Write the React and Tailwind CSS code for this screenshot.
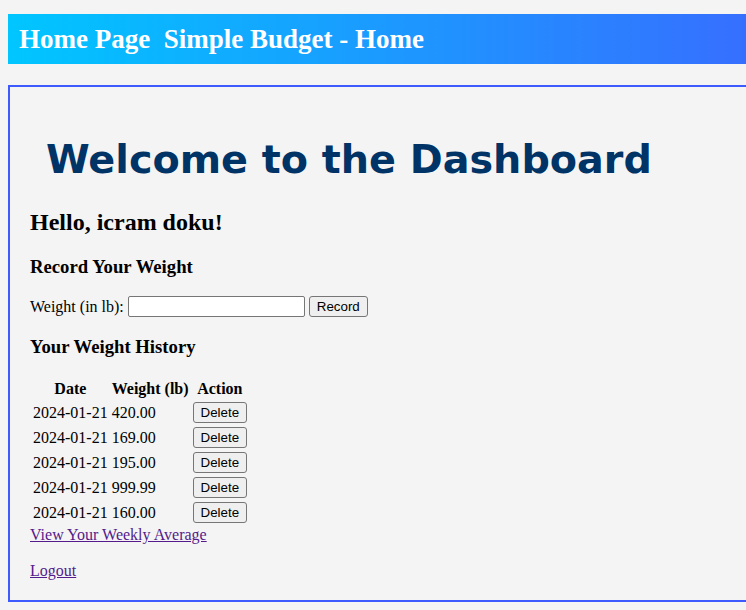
import React from "react";

const entries = [
  { date: "2024-01-21", weight: "420.00" },
  { date: "2024-01-21", weight: "169.00" },
  { date: "2024-01-21", weight: "195.00" },
  { date: "2024-01-21", weight: "999.99" },
  { date: "2024-01-21", weight: "160.00" },
];

const btn =
  "h-[21px] px-[7px] bg-[#efefef] border border-[#767676] rounded-[3px] text-[13.33px] leading-[15px] text-black font-['Liberation_Sans',Arial,sans-serif]";

const App = () => {
  return (
    <div className="min-h-screen bg-[#f4f4f4] pl-2 pt-[14px] text-[16px] text-black font-['Liberation_Serif','Times_New_Roman',serif]">
      <header className="h-[50px] flex items-center pl-[11px] bg-linear-to-r/srgb from-[#00c6ff] to-[#366fff]">
        <h1 className="text-[27px] font-bold text-white whitespace-pre">Home Page  Simple Budget - Home</h1>
      </header>

      <main className="mt-[21px] border-2 border-r-0 border-[#3d5afe] pl-5 pb-5">
        <h1 className="mt-[48px] ml-4 text-[39.7px] leading-[48px] font-bold text-[#003366] font-['DejaVu_Sans',Verdana,sans-serif]">
          Welcome to the Dashboard
        </h1>

        <h2 className="mt-[25px] text-[24px] leading-[28px] font-bold">Hello, icram doku!</h2>

        <h3 className="mt-[20px] text-[18.72px] leading-[22px] font-bold">Record Your Weight</h3>

        <form className="mt-[18px] flex items-center gap-1 h-[21px]" onSubmit={(e) => e.preventDefault()}>
          <label className="leading-[21px]">Weight (in lb):</label>
          <input
            type="text"
            className="w-[177px] h-[21px] bg-white border border-[#767676] rounded-[2px] px-[2px]"
          />
          <button type="submit" className={btn}>
            Record
          </button>
        </form>

        <h3 className="mt-[19px] text-[18.72px] leading-[22px] font-bold">Your Weight History</h3>

        <table className="mt-[19px] border-separate border-spacing-[2px]">
          <thead>
            <tr>
              <th className="p-[1px] text-center font-bold leading-[18px]">Date</th>
              <th className="p-[1px] text-center font-bold leading-[18px]">Weight (lb)</th>
              <th className="p-[1px] text-center font-bold leading-[18px]">Action</th>
            </tr>
          </thead>
          <tbody>
            {entries.map((entry, i) => (
              <tr key={i}>
                <td className="p-[1px] leading-[18px]">{entry.date}</td>
                <td className="p-[1px] leading-[18px]">{entry.weight}</td>
                <td className="p-[1px]">
                  <button className={btn + " block"}>Delete</button>
                </td>
              </tr>
            ))}
          </tbody>
        </table>

        <a href="#" className="block w-fit leading-[18px] underline text-[#551a8b]">
          View Your Weekly Average
        </a>
        <a href="#" className="block w-fit mt-[18px] leading-[18px] underline text-[#551a8b]">
          Logout
        </a>
      </main>
    </div>
  );
};

export default App;
